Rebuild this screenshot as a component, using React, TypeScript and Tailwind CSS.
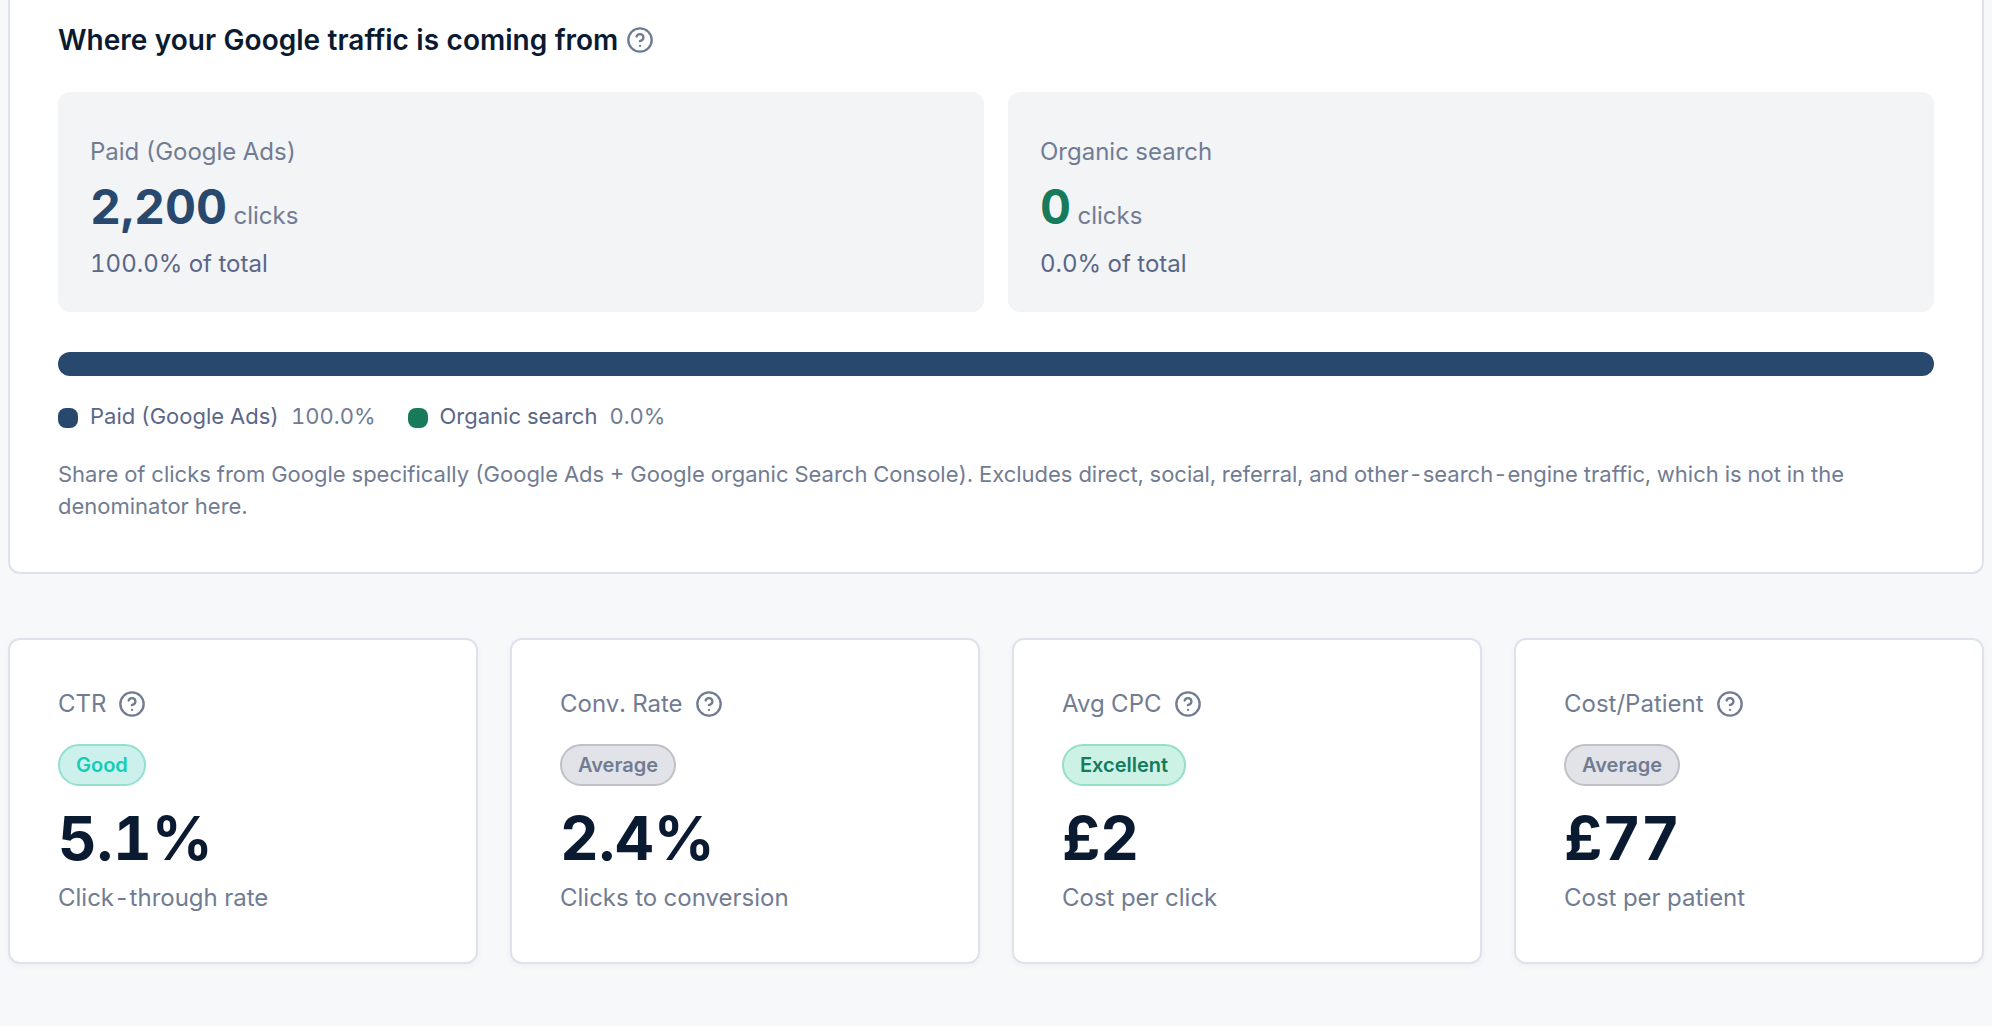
import React from 'react';
import { CircleHelp } from 'lucide-react';

type Rating = 'good' | 'average' | 'excellent';

interface TrafficSource {
  label: string;
  clicks: string;
  share: number;
  textClass: string;
  fillClass: string;
}

interface MetricProps {
  label: string;
  rating: Rating;
  value: string;
  caption: string;
}

const sources: TrafficSource[] = [
  {
    label: 'Paid (Google Ads)',
    clicks: '2,200',
    share: 100,
    textClass: 'text-[#28496d]',
    fillClass: 'bg-[#28496d]',
  },
  {
    label: 'Organic search',
    clicks: '0',
    share: 0,
    textClass: 'text-[#167a5b]',
    fillClass: 'bg-[#167a5b]',
  },
];

const metrics: MetricProps[] = [
  { label: 'CTR', rating: 'good', value: '5.1%', caption: 'Click-through rate' },
  { label: 'Conv. Rate', rating: 'average', value: '2.4%', caption: 'Clicks to conversion' },
  { label: 'Avg CPC', rating: 'excellent', value: '£2', caption: 'Cost per click' },
  { label: 'Cost/Patient', rating: 'average', value: '£77', caption: 'Cost per patient' },
];

const ratingStyles: Record<Rating, { text: string; className: string }> = {
  good: { text: 'Good', className: 'bg-[#ccf1ec] border-[#94dfd0] text-[#14cdb4]' },
  average: { text: 'Average', className: 'bg-[#e1e3e8] border-[#bfc1c6] text-[#717c93]' },
  excellent: { text: 'Excellent', className: 'bg-[#ccf2e5] border-[#94dfc5] text-[#167a5b]' },
};

const SourceCard: React.FC<TrafficSource> = ({ label, clicks, share, textClass }) => (
  <div className="h-[220px] rounded-xl bg-[#f2f4f6] px-8 pt-10">
    <p className="text-2xl leading-10 text-[#717c93]">{label}</p>
    <p className="mt-[7px] text-2xl leading-14 text-[#717c93]">
      <span className={`text-5xl leading-14 font-bold ${textClass}`}>{clicks}</span> clicks
    </p>
    <p className="text-2xl leading-10 text-[#5a6788]">{share.toFixed(1)}% of total</p>
  </div>
);

const MetricCard: React.FC<MetricProps> = ({ label, rating, value, caption }) => {
  const badge = ratingStyles[rating];

  return (
    <div className="h-[326px] rounded-xl border-2 border-[#dfe2ec] bg-white px-12 pt-11 shadow-[0_2px_6px_rgba(11,26,51,0.04)]">
      <div className="flex h-10 items-center gap-3 text-2xl text-[#717c93]">
        {label}
        <CircleHelp className="h-7 w-7 shrink-0" />
      </div>
      <div className="mt-5 flex">
        <span
          className={`flex h-[42px] items-center rounded-full border-2 px-4 text-xl font-semibold ${badge.className}`}
        >
          {badge.text}
        </span>
      </div>
      <p className="mt-4 text-[60px] leading-[72px] font-bold text-[#0a1a31]">{value}</p>
      <p className="mt-1 text-2xl leading-10 text-[#717c93]">{caption}</p>
    </div>
  );
};

const App: React.FC = () => {
  return (
    <div className="h-[1026px] overflow-hidden bg-[#f6f8fa] px-2 font-['Inter',sans-serif] tabular-nums">
      {/* Traffic split */}
      <section className="h-[574px] rounded-b-xl border-x-2 border-b-2 border-[#dfe2ec] bg-white px-12 pt-5">
        <div className="flex h-10 items-center gap-2">
          <h2 className="text-[28px] font-semibold text-[#0a1a31]">
            Where your Google traffic is coming from
          </h2>
          <CircleHelp className="h-7 w-7 shrink-0 text-[#717c93]" />
        </div>

        <div className="mt-8 grid grid-cols-2 gap-6">
          {sources.map((source) => (
            <SourceCard key={source.label} {...source} />
          ))}
        </div>

        {/* Share bar */}
        <div className="mt-10 flex h-6 overflow-hidden rounded-full bg-[#f2f4f6]">
          {sources.map((source) => (
            <div key={source.label} className={source.fillClass} style={{ width: `${source.share}%` }} />
          ))}
        </div>

        <div className="mt-6 flex h-8 items-center gap-8 text-[22px] leading-8">
          {sources.map((source) => (
            <div key={source.label} className="flex items-center gap-3">
              <span className={`mt-1 h-5 w-5 rounded-lg ${source.fillClass}`} />
              <span className="text-[#5a6788]">{source.label}</span>
              <span className="text-[#717c93]">{source.share.toFixed(1)}%</span>
            </div>
          ))}
        </div>

        <p className="mt-[26px] text-[22px] leading-8 text-[#717c93]">
          Share of clicks from Google specifically (Google Ads + Google organic Search Console). Excludes
          direct, social, referral, and other-search-engine traffic, which is not in the denominator here.
        </p>
      </section>

      {/* Headline metrics */}
      <section className="mt-16 grid grid-cols-4 gap-8">
        {metrics.map((metric) => (
          <MetricCard key={metric.label} {...metric} />
        ))}
      </section>
    </div>
  );
};

export default App;
